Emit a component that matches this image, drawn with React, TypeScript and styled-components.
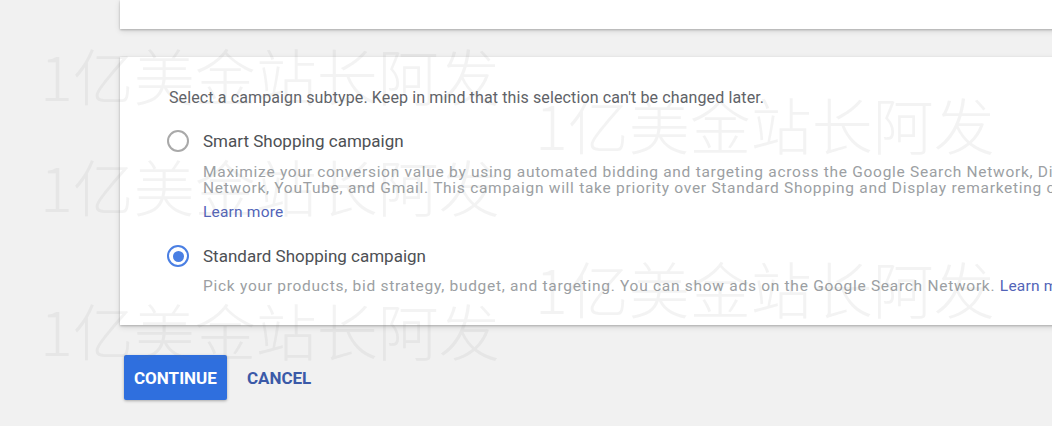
import React from 'react';
import styled, { createGlobalStyle } from 'styled-components';

const GlobalStyle = createGlobalStyle`
  html, body {
    margin: 0;
    padding: 0;
    background: #f1f1f1;
    font-family: Roboto, "Liberation Sans", Arial, sans-serif;
    overflow: hidden;
  }
`;

const Page = styled.div`
  position: relative;
  width: 1052px;
  height: 426px;
  overflow: hidden;
  padding-left: 120px;
  box-sizing: border-box;
  display: flex;
  flex-direction: column;
`;

const Card = styled.div<{ $height: number; $gap: number }>`
  flex: none;
  width: 1000px;
  height: ${(p) => p.$height}px;
  margin-top: ${(p) => p.$gap}px;
  background: #fff;
  box-shadow: 0 1px 2px rgba(0, 0, 0, 0.22), 0 2px 6px rgba(0, 0, 0, 0.12);
  box-sizing: border-box;
`;

const SubtypeCard = styled(Card)`
  padding: 31px 0 0 49px;
`;

const Intro = styled.p`
  margin: 0 0 22px;
  font-size: 16px;
  letter-spacing: 0.12px;
  line-height: 20px;
  color: #5f6368;
`;

const Option = styled.label`
  display: grid;
  grid-template-columns: 22px 1fr;
  column-gap: 14px;
  margin-bottom: 25px;
  margin-left: -2px;
  cursor: pointer;
`;

const Radio = styled.span<{ $checked?: boolean }>`
  width: 22px;
  height: 22px;
  border-radius: 50%;
  box-sizing: border-box;
  border: 2px solid ${(p) => (p.$checked ? '#4a7fe3' : '#a9a9a9')};
  display: flex;
  align-items: center;
  justify-content: center;

  &::after {
    content: '';
    width: 11px;
    height: 11px;
    border-radius: 50%;
    background: ${(p) => (p.$checked ? '#4a7fe3' : 'transparent')};
  }
`;

const OptionBody = styled.div`
  display: flex;
  flex-direction: column;
`;

const OptionTitle = styled.span`
  font-size: 17px;
  line-height: 22px;
  color: #4d5054;
`;

const Description = styled.span<{ $gap: number }>`
  margin-top: ${(p) => p.$gap}px;
  font-size: 15.5px;
  letter-spacing: 0.72px;
  line-height: 16px;
  color: #9c9fa3;
  white-space: nowrap;
`;

const LearnMore = styled.a<{ $block?: boolean }>`
  display: ${(p) => (p.$block ? 'block' : 'inline')};
  margin-top: ${(p) => (p.$block ? '8px' : '0')};
  letter-spacing: 0.2px;
  color: #5364b8;
  text-decoration: none;
`;

const Actions = styled.div`
  display: flex;
  align-items: center;
  gap: 10px;
  margin-top: 30px;
  padding-left: 4px;
`;

const Button = styled.button<{ $primary?: boolean }>`
  height: 45px;
  padding: 0 10px;
  border: none;
  border-radius: 2px;
  font-family: Roboto, "Liberation Sans", Arial, sans-serif;
  font-size: 17px;
  font-weight: 700;
  text-transform: uppercase;
  cursor: pointer;
  background: ${(p) => (p.$primary ? '#2f6fde' : 'transparent')};
  color: ${(p) => (p.$primary ? '#fff' : '#3b5aa8')};
  box-shadow: ${(p) => (p.$primary ? '0 1px 3px rgba(0,0,0,0.3)' : 'none')};
`;

const WatermarkLayer = styled.div`
  position: absolute;
  inset: 0;
  pointer-events: none;
`;

const Mark = styled.span`
  position: absolute;
  font-family: "Noto Sans CJK SC", "Noto Sans", sans-serif;
  font-weight: 300;
  font-size: 61px;
  line-height: 1;
  white-space: nowrap;
  color: rgba(120, 120, 120, 0.09);
`;

const marks = [
  { left: 40, top: 44 },
  { left: 535, top: 93 },
  { left: 40, top: 155 },
  { left: 535, top: 257 },
  { left: 40, top: 299 },
];

export default function App() {
  return (
    <>
      <GlobalStyle />
      <Page>
        <Card $height={29} $gap={0} />
        <SubtypeCard $height={268} $gap={28}>
          <Intro>Select a campaign subtype. Keep in mind that this selection can't be changed later.</Intro>
          <Option>
            <Radio />
            <OptionBody>
              <OptionTitle>Smart Shopping campaign</OptionTitle>
              <Description $gap={12}>
                Maximize your conversion value by using automated bidding and targeting across the Google Search Network, Display
                <br />
                Network, YouTube, and Gmail. This campaign will take priority over Standard Shopping and Display remarketing campaigns.
                <LearnMore $block href="#">Learn more</LearnMore>
              </Description>
            </OptionBody>
          </Option>
          <Option>
            <Radio $checked />
            <OptionBody>
              <OptionTitle>Standard Shopping campaign</OptionTitle>
              <Description $gap={11}>
                Pick your products, bid strategy, budget, and targeting. You can show ads on the Google Search Network.{' '}
                <LearnMore href="#">Learn more</LearnMore>
              </Description>
            </OptionBody>
          </Option>
        </SubtypeCard>
        <Actions>
          <Button $primary>Continue</Button>
          <Button>Cancel</Button>
        </Actions>
        <WatermarkLayer>
          {marks.map((m, i) => (
            <Mark key={i} style={{ left: m.left, top: m.top }}>
              1亿美金站长阿发
            </Mark>
          ))}
        </WatermarkLayer>
      </Page>
    </>
  );
}
